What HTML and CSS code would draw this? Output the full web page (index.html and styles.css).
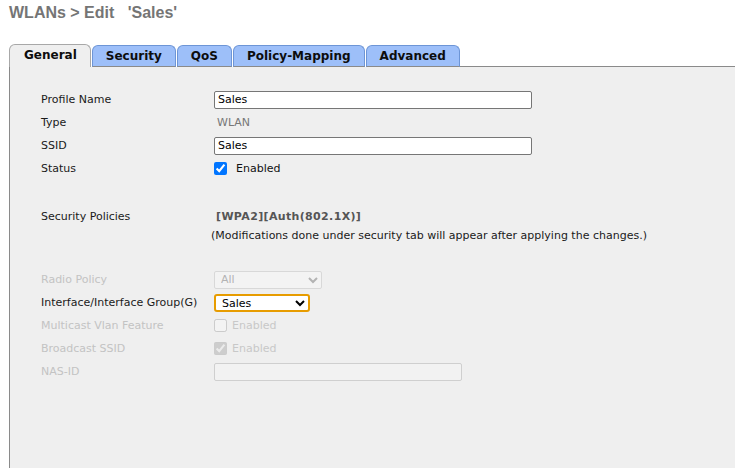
FILE: index.html
```html
<!DOCTYPE html>
<html>
<head>
<meta charset="utf-8">
<link rel="stylesheet" href="styles.css">
</head>
<body>
<div class="page">
  <h1 class="title">WLANs &gt; Edit &nbsp;&nbsp;'Sales'</h1>
  <div class="tabs">
    <div class="tab active">General</div>
    <div class="tab">Security</div>
    <div class="tab">QoS</div>
    <div class="tab">Policy-Mapping</div>
    <div class="tab">Advanced</div>
    <div class="tab-rest"></div>
  </div>
  <div class="panel">
    <div class="row">
      <div class="label">Profile Name</div>
      <div class="value"><input class="text wide" type="text" value="Sales"></div>
    </div>
    <div class="row">
      <div class="label">Type</div>
      <div class="value muted">WLAN</div>
    </div>
    <div class="row">
      <div class="label">SSID</div>
      <div class="value"><input class="text wide" type="text" value="Sales"></div>
    </div>
    <div class="row">
      <div class="label">Status</div>
      <div class="value"><input class="check" type="checkbox" checked><span class="check-label">Enabled</span></div>
    </div>
    <div class="spacer"></div>
    <div class="row multi">
      <div class="label">Security Policies</div>
      <div class="value stack">
        <div class="policy">[WPA2][Auth(802.1X)]</div>
        <div class="note">(Modifications done under security tab will appear after applying the changes.)</div>
      </div>
    </div>
    <div class="spacer"></div>
    <div class="row">
      <div class="label disabled">Radio Policy</div>
      <div class="value"><select class="sel radio" disabled><option>All</option></select></div>
    </div>
    <div class="row">
      <div class="label">Interface/Interface Group(G)</div>
      <div class="value"><select class="sel iface"><option>Sales</option></select></div>
    </div>
    <div class="row">
      <div class="label disabled">Multicast Vlan Feature</div>
      <div class="value"><input class="check" type="checkbox" disabled><span class="check-label off">Enabled</span></div>
    </div>
    <div class="row">
      <div class="label disabled">Broadcast SSID</div>
      <div class="value"><input class="check" type="checkbox" checked disabled><span class="check-label off">Enabled</span></div>
    </div>
    <div class="row">
      <div class="label disabled">NAS-ID</div>
      <div class="value"><input class="text nas" type="text" disabled></div>
    </div>
  </div>
</div>
</body>
</html>
```
FILE: styles.css
```css
html, body {
  margin: 0;
  padding: 0;
  background: #ffffff;
  overflow: hidden;
}
body {
  width: 735px;
  height: 468px;
  font-family: "DejaVu Sans", Verdana, sans-serif;
  font-size: 11px;
  color: #1a1a1a;
}
.page {
  padding-left: 9px;
  height: 468px;
  display: flex;
  flex-direction: column;
}
.title {
  margin: 2px 0 0 0;
  font-family: "Liberation Sans", Arial, sans-serif;
  font-size: 16px;
  font-weight: bold;
  line-height: 22px;
  color: #757575;
}
.tabs {
  margin-top: 20px;
  display: flex;
  align-items: flex-end;
  height: 23px;
}
.tab {
  height: 22px;
  box-sizing: border-box;
  padding: 0 13px;
  margin-right: 1px;
  font-family: "DejaVu Sans", Verdana, sans-serif;
  font-size: 12px;
  font-weight: bold;
  line-height: 21px;
  color: #0d0d0d;
  background: #9dbff9;
  border: 1px solid #6d95d6;
  border-bottom: 1px solid #8a8a8a;
  border-radius: 6px 6px 0 0;
}
.tab.active {
  height: 23px;
  background: #efefef;
  border: 1px solid #a8a8a8;
  border-bottom: none;
  padding: 0 13px 0 14px;
}
.tab-rest {
  flex: 1;
  height: 22px;
  border-bottom: 1px solid #8a8a8a;
  margin-left: -1px;
}
.panel {
  flex: 1;
  background: #efefef;
  border-left: 1px solid #8a8a8a;
  padding: 21px 0 0 31px;
}
.row {
  display: flex;
  align-items: center;
  height: 23px;
}
.row.multi {
  height: auto;
  align-items: flex-start;
  line-height: 19px;
}
.spacer {
  height: 27px;
}
.row.multi + .spacer {
  height: 23px;
}
.label {
  width: 173px;
  flex: none;
  color: #1a1a1a;
}
.label.disabled {
  color: #c3c3c3;
}
.value {
  display: flex;
  align-items: center;
}
.value.stack {
  display: block;
  margin-left: -3px;
}
.muted {
  color: #777;
  padding-left: 3px;
}
.policy {
  padding-left: 5px;
  font-weight: bold;
  color: #555;
  letter-spacing: 0.35px;
}
.note {
  color: #1a1a1a;
}
.text {
  box-sizing: border-box;
  height: 18px;
  padding: 0 3px;
  margin: 0;
  font-family: "DejaVu Sans", Verdana, sans-serif;
  font-size: 11px;
  color: #000;
  background: #fff;
  border: 1px solid #767676;
  border-radius: 2px;
}
.text.wide {
  width: 318px;
}
.text.nas {
  width: 248px;
  background: #f2f2f2;
  border-color: #cfcfcf;
}
.check {
  margin: 0;
  width: 13px;
  height: 13px;
  accent-color: #0075ff;
}
.check-label {
  margin-left: 9px;
  color: #111;
}
.check-label.off {
  margin-left: 5px;
  color: #c8c8c8;
}
.sel {
  box-sizing: border-box;
  height: 18px;
  margin: 0;
  padding: 0 2px;
  font-family: "DejaVu Sans", Verdana, sans-serif;
  font-size: 11px;
}
.sel.radio {
  width: 108px;
  color: #9a9a9a;
  background: #f5f5f5;
  border: 1px solid #cfcfcf;
  border-radius: 2px;
}
.sel.iface {
  width: 96px;
  color: #000;
  background: #fff;
  border: 2px solid #e79c00;
  border-radius: 3px;
}
```
